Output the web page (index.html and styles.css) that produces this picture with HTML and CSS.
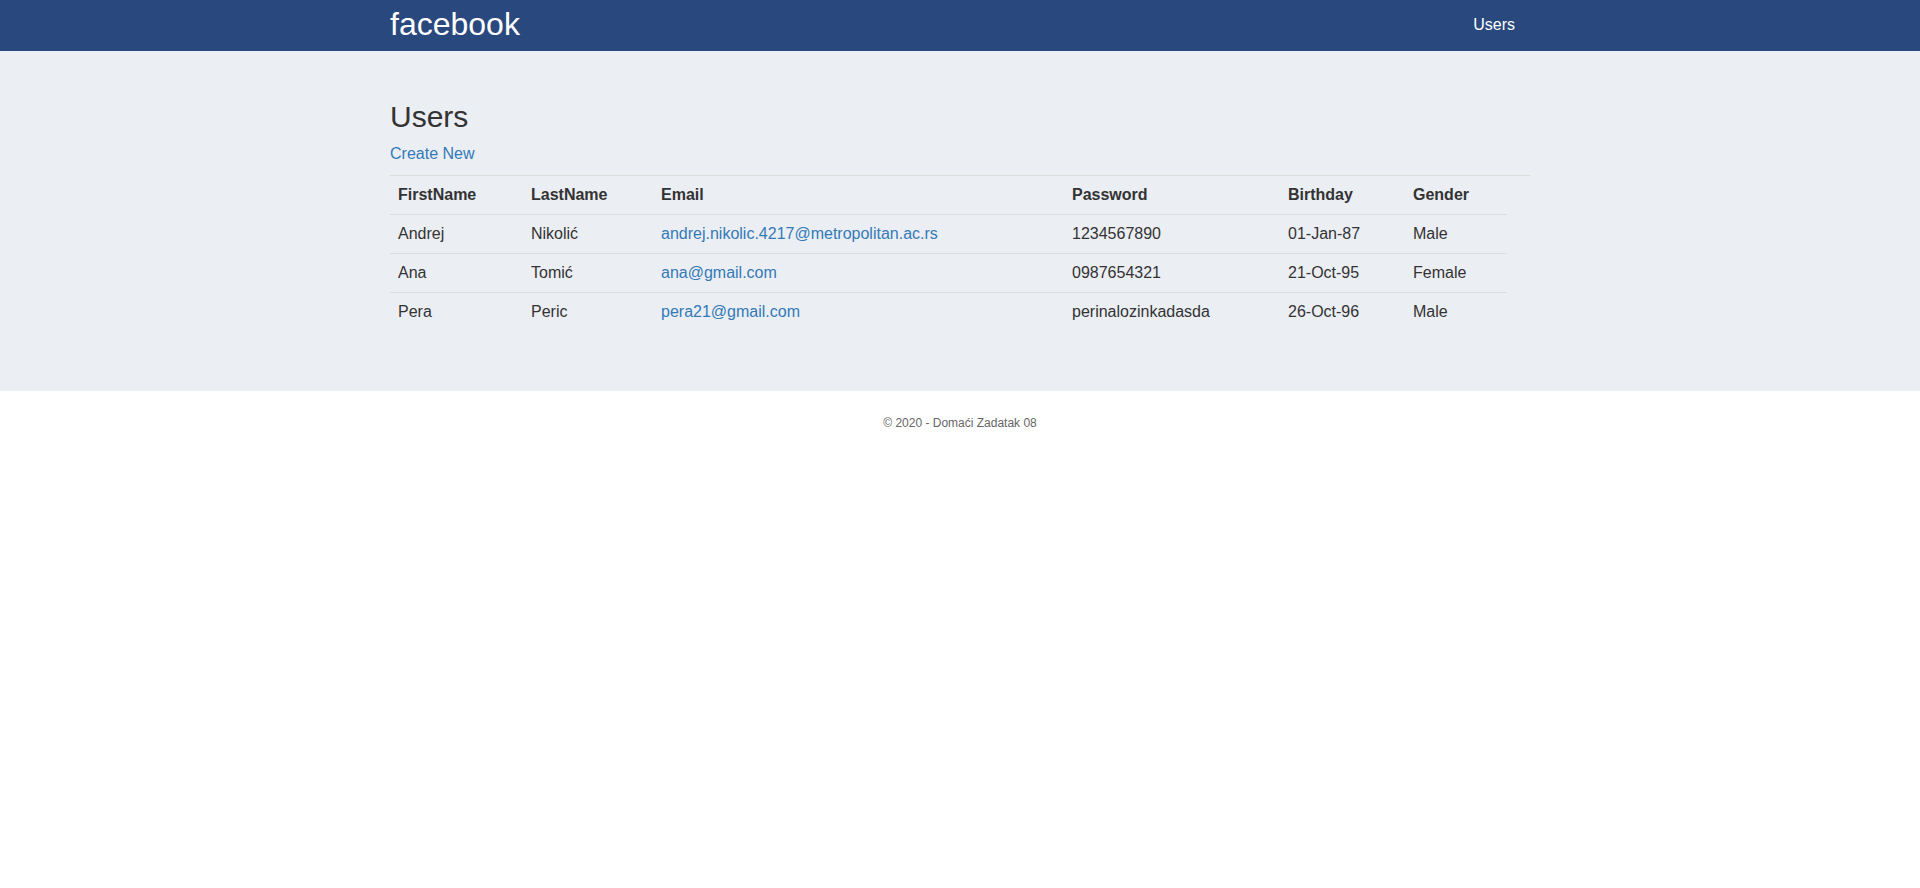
FILE: index.html
```html
<!DOCTYPE html>
<html lang="sr">
<head>
<meta charset="utf-8">
<title>Users</title>
<link rel="stylesheet" href="styles.css">
</head>
<body>
<header class="navbar">
  <div class="nav-inner">
    <a class="brand" href="#">facebook</a>
    <a class="nav-link" href="#">Users</a>
  </div>
</header>
<main class="main">
  <div class="container">
    <h2 class="title">Users</h2>
    <p class="actions"><a class="link" href="#">Create New</a></p>
    <div class="table-wrap">
      <table class="users">
        <colgroup>
          <col class="c1"><col class="c2"><col class="c3"><col class="c4"><col class="c5"><col class="c6">
        </colgroup>
        <thead>
          <tr><th>FirstName</th><th>LastName</th><th>Email</th><th>Password</th><th>Birthday</th><th>Gender</th></tr>
        </thead>
        <tbody>
          <tr><td>Andrej</td><td>Nikolić</td><td><a class="link" href="#">andrej.nikolic.4217@metropolitan.ac.rs</a></td><td>1234567890</td><td>01-Jan-87</td><td>Male</td></tr>
          <tr><td>Ana</td><td>Tomić</td><td><a class="link" href="#">ana@gmail.com</a></td><td>0987654321</td><td>21-Oct-95</td><td>Female</td></tr>
          <tr><td>Pera</td><td>Peric</td><td><a class="link" href="#">pera21@gmail.com</a></td><td>perinalozinkadasda</td><td>26-Oct-96</td><td>Male</td></tr>
        </tbody>
      </table>
    </div>
  </div>
</main>
<footer class="footer">
  <p class="copy">© 2020 - Domaći Zadatak 08</p>
</footer>
</body>
</html>
```

FILE: styles.css
```css
html, body {
  margin: 0;
  padding: 0;
}
body {
  font-family: "Liberation Sans", Arial, Helvetica, sans-serif;
  font-size: 16px;
  line-height: 22px;
  color: #333333;
  background: #ffffff;
}
a {
  text-decoration: none;
}
.navbar {
  background: #29487d;
  height: 51px;
}
.nav-inner {
  width: 1140px;
  margin: 0 auto;
  display: flex;
  justify-content: space-between;
  align-items: flex-start;
}
.brand {
  font-size: 32px;
  line-height: 49px;
  color: #ffffff;
}
.nav-link {
  font-size: 16px;
  line-height: 50px;
  color: #ffffff;
  padding-right: 15px;
}
.main {
  background: #ebeef3;
  padding: 30px 0 60px;
}
.container {
  width: 1140px;
  margin: 0 auto;
}
.title {
  font-size: 30px;
  font-weight: normal;
  line-height: 33px;
  margin: 19px 0 10px;
}
.actions {
  margin: 0 0 10px;
}
.link {
  color: #337ab7;
}
.table-wrap {
  border-top: 1px solid #dddddd;
}
.users {
  width: 1117px;
  table-layout: fixed;
  border-collapse: collapse;
}
.c1 { width: 133px; }
.c2 { width: 130px; }
.c3 { width: 411px; }
.c4 { width: 216px; }
.c5 { width: 125px; }
.c6 { width: 102px; }
.users th,
.users td {
  padding: 8px;
  text-align: left;
  vertical-align: top;
  white-space: nowrap;
}
.users th {
  font-weight: bold;
}
.users td {
  border-top: 1px solid #dddddd;
}
.footer {
  padding-top: 24px;
}
.copy {
  margin: 0;
  text-align: center;
  font-size: 12px;
  line-height: 17px;
  color: #666666;
}
```
